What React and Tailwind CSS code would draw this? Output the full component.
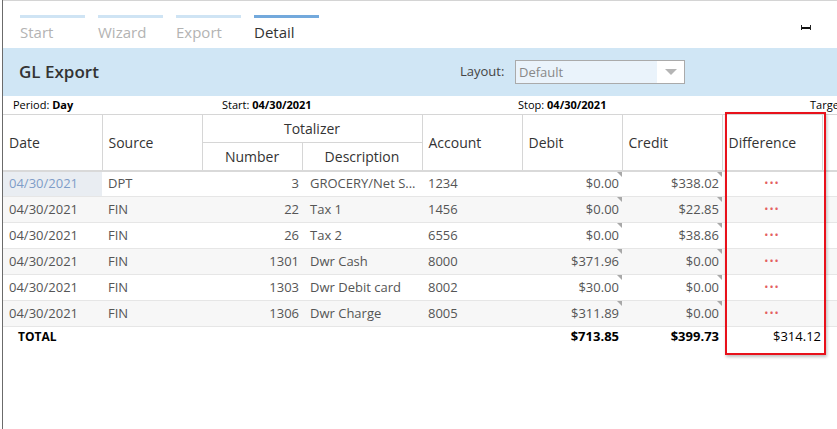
import React from "react";

const TABS = [
  { label: "Start", active: false },
  { label: "Wizard", active: false },
  { label: "Export", active: false },
  { label: "Detail", active: true },
];

const ROWS = [
  { date: "04/30/2021", source: "DPT", num: "3", desc: "GROCERY/Net S...", acct: "1234", debit: "$0.00", credit: "$338.02" },
  { date: "04/30/2021", source: "FIN", num: "22", desc: "Tax 1", acct: "1456", debit: "$0.00", credit: "$22.85" },
  { date: "04/30/2021", source: "FIN", num: "26", desc: "Tax 2", acct: "6556", debit: "$0.00", credit: "$38.86" },
  { date: "04/30/2021", source: "FIN", num: "1301", desc: "Dwr Cash", acct: "8000", debit: "$371.96", credit: "$0.00" },
  { date: "04/30/2021", source: "FIN", num: "1303", desc: "Dwr Debit card", acct: "8002", debit: "$30.00", credit: "$0.00" },
  { date: "04/30/2021", source: "FIN", num: "1306", desc: "Dwr Charge", acct: "8005", debit: "$311.89", credit: "$0.00" },
];

// little grey corner mark on editable money cells
function Corner() {
  return (
    <span className="absolute top-0 right-0 w-0 h-0 border-t-[5px] border-l-[5px] border-t-[#a8a8a8] border-l-transparent" />
  );
}

export default function App() {
  return (
    <div className="flex w-[837px] h-[429px] bg-white overflow-hidden text-[#333]" style={{ fontFamily: '"Open Sans", "Noto Sans", sans-serif' }}>
      <div className="w-[3px] border-r border-[#6b6b6b] shrink-0" />
      <div className="w-[834px] shrink-0 border-t border-[#d4d4d4] relative overflow-hidden">
        {/* Tabs */}
        <div className="flex items-start h-[47px] pl-[17px] pt-[14px]">
          {TABS.map((t) => (
            <div key={t.label} className="w-[65px] mr-[13px] shrink-0">
              <div className={`h-[3px] ${t.active ? "bg-[#73a9dc]" : "bg-[#cfe4f4]"}`} />
              <div className={`mt-[4px] text-[15px] leading-[20px] ${t.active ? "text-[#333] font-medium" : "text-[#b3b3b3]"}`}>
                {t.label}
              </div>
            </div>
          ))}
          {/* expand toggle */}
          <div className="ml-auto mr-[26px] mt-[10px] w-[10px] min-w-[10px] h-[5px] border-x border-[#222] flex items-center shrink-0">
            <div className="flex-1 h-[2px] bg-[#111]" />
          </div>
        </div>

        {/* Header band */}
        <div className="h-[48px] bg-[#d0e6f5] flex items-center pl-[16px]">
          <div className="text-[17px] font-semibold text-[#333] w-[441px]">GL Export</div>
          <div className="text-[13px] text-[#444] w-[55px]">Layout:</div>
          <div className="flex w-[170px] h-[24px] border border-[#aaa] bg-[#eaf3fb]">
            <div className="flex-1 text-[13px] leading-[22px] pl-[3px] text-[#888]">Default</div>
            <div className="w-[27px] bg-white flex items-center justify-center">
              <span className="w-0 h-0 border-l-[6px] border-r-[6px] border-t-[6px] border-l-transparent border-r-transparent border-t-[#b5b5b5]" />
            </div>
          </div>
        </div>

        {/* Info row */}
        <div className="flex h-[18px] items-center text-[11px] text-black whitespace-nowrap overflow-hidden">
          <div className="pl-[10px] w-[219px] shrink-0">Period: <b>Day</b></div>
          <div className="w-[296px] shrink-0">Start: <b>04/30/2021</b></div>
          <div className="w-[292px] shrink-0">Stop: <b>04/30/2021</b></div>
          <div className="shrink-0">Target</div>
        </div>

        {/* Table */}
        <table className="table-fixed border-collapse w-full text-[13px]">
          <colgroup>
            <col className="w-[99px]" />
            <col className="w-[100px]" />
            <col className="w-[100px]" />
            <col className="w-[120px]" />
            <col className="w-[100px]" />
            <col className="w-[100px]" />
            <col className="w-[100px]" />
            <col className="w-[100px]" />
            <col />
          </colgroup>
          <thead className="text-[14px] text-[#333]">
            <tr className="h-[28px] border-t border-[#d6d6d6]">
              <th rowSpan={2} className="font-normal text-left pl-[6px] border-r border-[#d6d6d6]">Date</th>
              <th rowSpan={2} className="font-normal text-left pl-[6px] border-r border-[#d6d6d6]">Source</th>
              <th colSpan={2} className="font-normal text-center border-r border-b border-[#d6d6d6]">Totalizer</th>
              <th rowSpan={2} className="font-normal text-left pl-[6px] border-r border-[#d6d6d6]">Account</th>
              <th rowSpan={2} className="font-normal text-left pl-[6px] border-r border-[#d6d6d6]">Debit</th>
              <th rowSpan={2} className="font-normal text-left pl-[6px] border-r border-[#d6d6d6]">Credit</th>
              <th rowSpan={2} className="font-normal text-left pl-[6px] border-r border-[#d6d6d6]">Difference</th>
              <th rowSpan={2} />
            </tr>
            <tr className="h-[28px] border-b-2 border-[#d9d9d9]">
              <th className="font-normal text-center border-r border-[#d6d6d6]">Number</th>
              <th className="font-normal text-center border-r border-[#d6d6d6]">Description</th>
            </tr>
          </thead>
          <tbody className="text-[#555]">
            {ROWS.map((r, i) => (
              <tr key={i} className={`h-[26px] border-b border-[#e6e6e6] ${i % 2 ? "bg-[#f7f7f7]" : "bg-white"}`}>
                <td className={`pl-[6px] ${i === 0 ? "bg-[#e9edf2] text-[#7f9dc8]" : ""}`}>{r.date}</td>
                <td className="pl-[6px]">{r.source}</td>
                <td className="text-right pr-[3px]">{r.num}</td>
                <td className="pl-[8px] truncate">{r.desc}</td>
                <td className="pl-[6px]">{r.acct}</td>
                <td className="text-right pr-[3px] relative">{r.debit}<Corner /></td>
                <td className="text-right pr-[3px] relative">{r.credit}<Corner /></td>
                <td className="text-center text-[#e46060] text-[11px] tracking-[1px] leading-none pb-[3px]">•••</td>
                <td />
              </tr>
            ))}
            <tr className="h-[20px] text-black">
              <td colSpan={2} className="pl-[15px] font-bold text-[12px]">TOTAL</td>
              <td />
              <td />
              <td />
              <td className="text-right pr-[3px] font-bold">$713.85</td>
              <td className="text-right pr-[3px] font-bold">$399.73</td>
              <td className="text-right pr-[1px]">$314.12</td>
              <td />
            </tr>
          </tbody>
        </table>

        {/* red highlight box */}
        <div className="absolute left-[722px] top-[111px] w-[101px] h-[243px] border-2 border-[#e8111b] shadow-[1px_2px_3px_rgba(0,0,0,0.25)] pointer-events-none" />
      </div>
    </div>
  );
}
